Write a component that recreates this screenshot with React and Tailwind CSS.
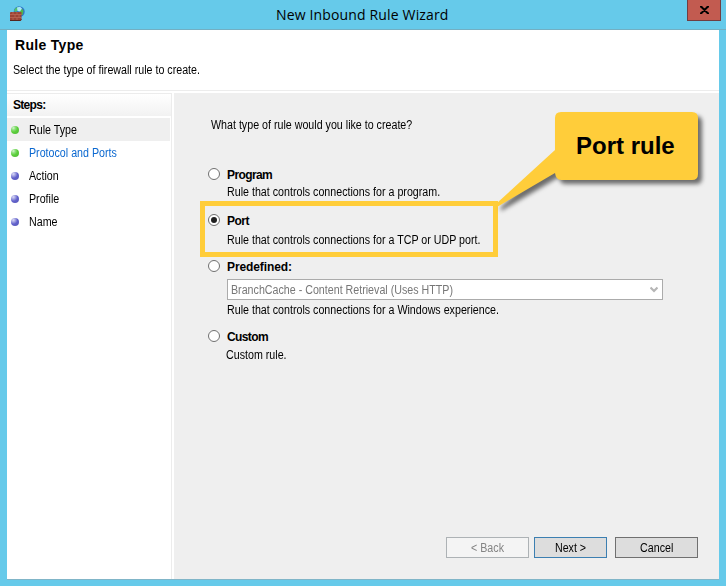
import React from "react";

const steps = [
  { label: "Rule Type", done: true, active: true },
  { label: "Protocol and Ports", done: true, link: true },
  { label: "Action" },
  { label: "Profile" },
  { label: "Name" },
];

function Narrow({ children, center }) {
  return (
    <span className={"inline-block scale-x-[0.89] whitespace-nowrap " + (center ? "origin-center" : "origin-left")}>
      {children}
    </span>
  );
}

function FirewallIcon() {
  return (
    <svg width="17" height="16" viewBox="0 0 17 16">
      <circle cx="10.2" cy="5.700" r="5.500" fill="#2f74c8" />
      <path d="M5 5Q6 1 10 1L9 4L7 6Z" fill="#55c46c" />
      <path d="M10.500 5L13 2.500L14.500 5L13.500 9L11 9Z" fill="#4fb948" />
      <path d="M8 1.500L11 .8L13 2.500L11 5.500L8.500 5Z" fill="#a9e6f8" />
      <path d="M1.500 6H12.500V14L11.500 15H1V7Z" fill="#9b4334" />
      <path d="M1 8.500H12.500M1 11.500H12M4 6V8M8 6V8M6 9V11M10 9V11M4 12V14M8 12V14" stroke="#c77660" strokeWidth=".6" />
      <path d="M1 14.500H11L12.500 13.500" stroke="#54251e" fill="none" />
    </svg>
  );
}

function Ball({ done }) {
  return (
    <span
      className={
        "h-2 w-2 rounded-full " +
        (done
          ? "bg-[radial-gradient(circle_at_30%_25%,#d5f5ce_0%,#8ade78_25%,#5ccf3a_50%,#4fb53a_100%)]"
          : "bg-[radial-gradient(circle_at_30%_25%,#dadaf8_0%,#a0a0e0_25%,#6262cc_50%,#5656b4_100%)]")
      }
    />
  );
}

function Radio({ checked }) {
  return (
    <span className="flex h-3 w-3 shrink-0 items-center justify-center rounded-full border border-[#707070] bg-white">
      {checked && <span className="h-1.5 w-1.5 rounded-full bg-[#202020]" />}
    </span>
  );
}

function Option({ label, checked, tracking }) {
  return (
    <div className="flex h-4 items-center gap-[7px]">
      <Radio checked={checked} />
      <span className={"pt-0.5 font-bold leading-[14px] " + tracking}>{label}</span>
    </div>
  );
}

export default function App() {
  return (
    <div className="relative flex h-[586px] w-[726px] flex-col overflow-hidden bg-[#66caea] font-['Liberation_Sans',Arial,sans-serif] text-[12px] leading-[14px] text-black">
      <header className="flex h-[30px] shrink-0 items-start border-b border-[#73afc2]">
        <div className="w-[50px] pl-[9px] pt-1.5"><FirewallIcon /></div>
        <h1 className="flex-1 pl-[226px] pt-[5px] font-['Open_Sans',sans-serif] text-[14px] leading-[20px] tracking-[0.15px] whitespace-nowrap">New Inbound Rule Wizard</h1>
        <button className="mr-[5px] flex h-[21px] w-[34px] items-center justify-center border border-t-0 border-[#703e42] bg-[#c25b50]">
          <svg width="9" height="8" viewBox="0 0 9 8" fill="none" stroke="#000" strokeWidth="2"><path d="M1 .5L8 7.500M8 .5L1 7.500M0 .5H2.500M6.500 .5H9M0 7.500H2.500M6.500 7.500H9" /></svg>
        </button>
      </header>

      <main className="mx-[7px] flex h-[550px] flex-col border-b border-[#80b5c8] bg-white">
        <section className="h-[61px] shrink-0 border-b border-[#ececec] whitespace-nowrap">
          <h2 className="pl-2 pt-[7px] text-[14px] font-bold leading-4 tracking-[0.3px]">Rule Type</h2>
          <p className="pl-1.5 pt-2.5"><Narrow>Select the type of firewall rule to create.</Narrow></p>
        </section>

        <div className="flex flex-1 pt-0.5">
          <aside className="w-[165px] shrink-0 border-r border-[#ececec]">
            <h3 className="h-[23px] border-t border-[#ececec] bg-linear-to-b from-white to-[#f2f2f2] pl-1.5 pt-1 font-bold tracking-[-0.7px]">Steps:</h3>
            <ul className="pt-0.5">
              {steps.map((step) => (
                <li key={step.label} className={"mr-px flex h-[23px] items-center gap-[10px] pl-1 " + (step.active ? "bg-[#efefef]" : "")}>
                  <Ball done={step.done} />
                  <span className={"h-[14px] -translate-y-px pt-px " + (step.link ? "text-[#0b68d0]" : "")}><Narrow>{step.label}</Narrow></span>
                </li>
              ))}
            </ul>
          </aside>

          <section className="ml-0.5 flex flex-1 flex-col bg-[#efefef] pl-[34px] whitespace-nowrap">
            <p className="h-[73px] pl-[3px] pt-[25px]"><Narrow>What type of rule would you like to create?</Narrow></p>
            <Option label="Program" tracking="tracking-[-0.6px]" />
            <p className="h-[30px] pl-[19px] pt-[3px]"><Narrow>Rule that controls connections for a program.</Narrow></p>
            <Option label="Port" checked tracking="tracking-[-0.5px]" />
            <p className="h-[30px] pl-[19px] pt-[5px]"><Narrow>Rule that controls connections for a TCP or UDP port.</Narrow></p>
            <Option label="Predefined:" tracking="tracking-[-0.1px]" />
            <div className="ml-[19px] mt-[5px] flex h-[21px] w-[436px] items-center justify-between border border-[#ababab] bg-white pl-[3px] pr-1 text-[#777]">
              <Narrow>BranchCache - Content Retrieval (Uses HTTP)</Narrow>
              <svg width="8" height="7" viewBox="0 0 8 7" fill="none" stroke="#b5b5b5" strokeWidth="2.200"><path d="M.5 1.500L4 5L7.500 1.500" /></svg>
            </div>
            <p className="h-7 pl-[19px] pt-[3px]"><Narrow>Rule that controls connections for a Windows experience.</Narrow></p>
            <Option label="Custom" tracking="tracking-[-0.6px]" />
            <p className="pl-[18px] pt-1"><Narrow>Custom rule.</Narrow></p>
            <footer className="mb-[21px] mr-[21px] mt-auto flex justify-end">
              <button className="h-[21px] w-[83px] border border-[#adb2b5] bg-[#f4f4f4] text-[#838383]"><Narrow center>&lt; Back</Narrow></button>
              <button className="ml-[5px] h-[21px] w-[73px] border border-[#3c7fb1] bg-[#ddd]"><Narrow center>Next &gt;</Narrow></button>
              <button className="ml-2 h-[21px] w-[83px] border border-[#707070] bg-[#ddd]"><Narrow center>Cancel</Narrow></button>
            </footer>
          </section>
        </div>
      </main>

      <div className="absolute left-[200px] top-[201px] h-[56px] w-[298px] border-5 border-[#ffcd3a]" />
      <div className="absolute left-[490px] top-[106px] h-[112px] w-[220px]">
        <svg className="absolute inset-0 drop-shadow-[4px_4px_2px_rgba(0,0,0,0.55)]" width="220" height="112" viewBox="0 0 220 112">
          <path d="M71 6H202Q208 6 208 12V68Q208 74 202 74H71Q66 74 65 67L7 101V97L65 44V12Q65 6 71 6Z" fill="#ffcd3a" />
        </svg>
        <span className="absolute left-[86px] top-[25px] text-[24px] font-bold leading-[29px] whitespace-nowrap">Port rule</span>
      </div>
    </div>
  );
}
